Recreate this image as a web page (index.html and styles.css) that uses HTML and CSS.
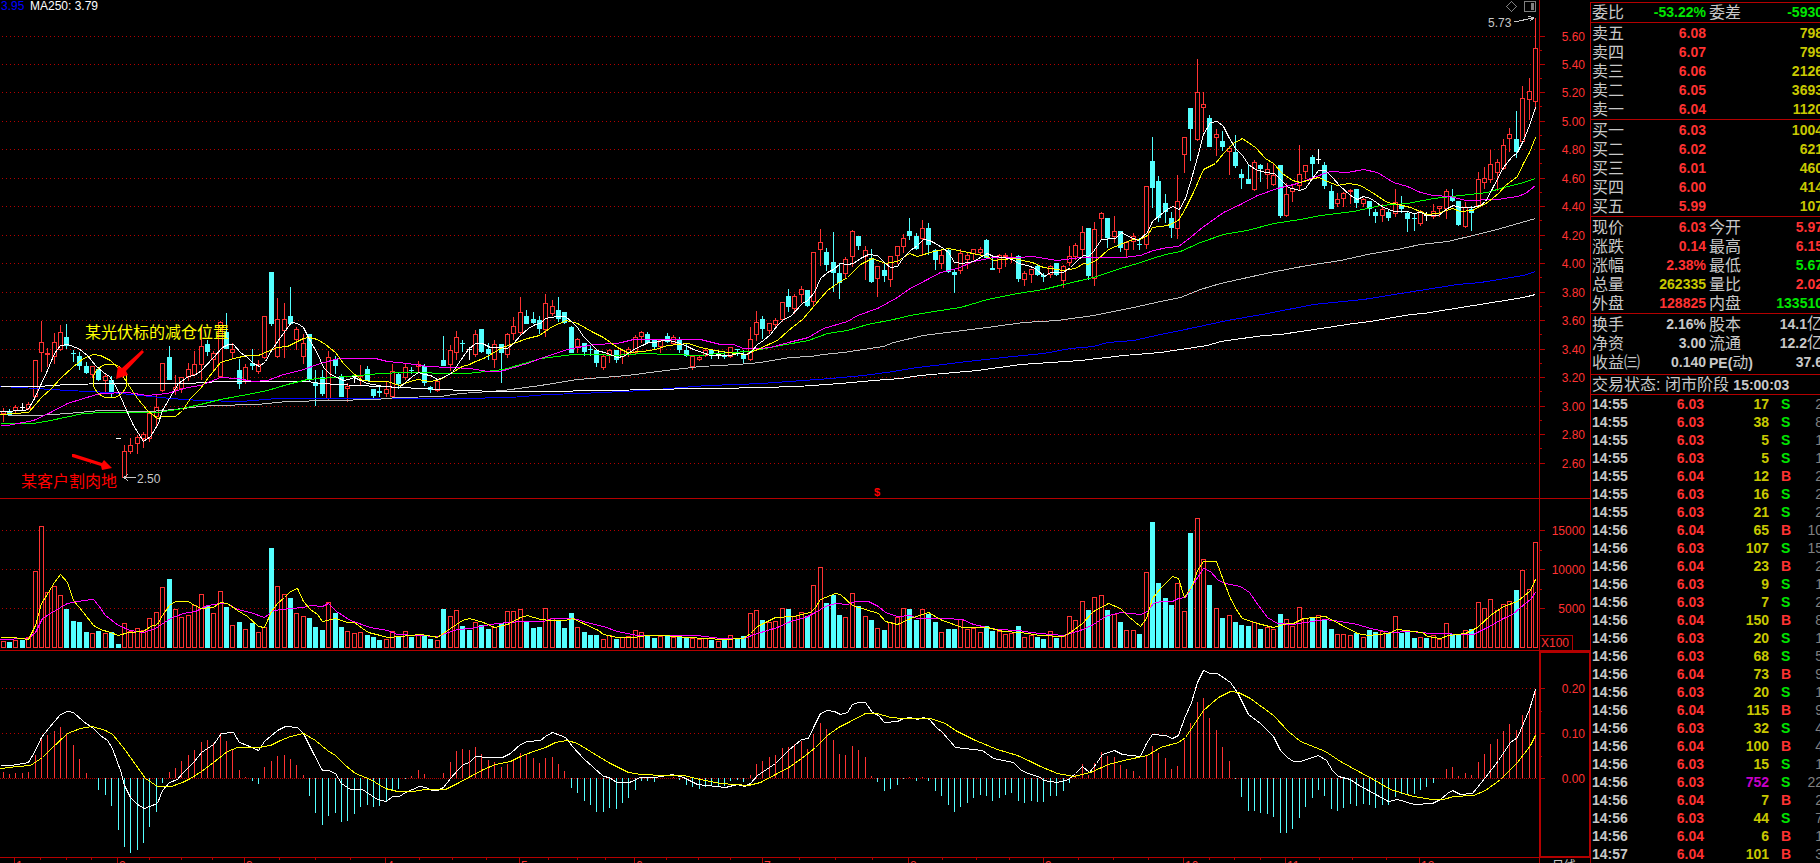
FILE: index.html
```html
<!DOCTYPE html>
<html lang="zh-CN">
<head>
<meta charset="utf-8">
<title>日线</title>
<link rel="stylesheet" href="styles.css">
</head>
<body>
<main class="terminal">
  <section class="charts">
    <svg class="plot" id="price" viewBox="0 0 1591 498" preserveAspectRatio="none"></svg>
    <svg class="plot" id="volume" viewBox="0 498 1591 152" preserveAspectRatio="none"></svg>
    <svg class="plot" id="macd" viewBox="0 650 1591 213" preserveAspectRatio="none"></svg>
  </section>
  <aside class="quote">
    <table class="block block-first">
      <tr><th>委比</th><td class="down">-53.22%</td><th>委差</th><td class="down">-5930</td></tr>
    </table>
    <table class="block">
      <tr><th>卖五</th><td class="up">6.08</td><th></th><td class="vol">798</td></tr>
      <tr><th>卖四</th><td class="up">6.07</td><th></th><td class="vol">799</td></tr>
      <tr><th>卖三</th><td class="up">6.06</td><th></th><td class="vol">2126</td></tr>
      <tr><th>卖二</th><td class="up">6.05</td><th></th><td class="vol">3693</td></tr>
      <tr><th>卖一</th><td class="up">6.04</td><th></th><td class="vol">1120</td></tr>
    </table>
    <table class="block">
      <tr><th>买一</th><td class="up">6.03</td><th></th><td class="vol">1004</td></tr>
      <tr><th>买二</th><td class="up">6.02</td><th></th><td class="vol">621</td></tr>
      <tr><th>买三</th><td class="up">6.01</td><th></th><td class="vol">460</td></tr>
      <tr><th>买四</th><td class="up">6.00</td><th></th><td class="vol">414</td></tr>
      <tr><th>买五</th><td class="up">5.99</td><th></th><td class="vol">107</td></tr>
    </table>
    <table class="block">
      <tr><th>现价</th><td class="up">6.03</td><th>今开</th><td class="up">5.97</td></tr>
      <tr><th>涨跌</th><td class="up">0.14</td><th>最高</th><td class="up">6.15</td></tr>
      <tr><th>涨幅</th><td class="up">2.38%</td><th>最低</th><td class="down">5.67</td></tr>
      <tr><th>总量</th><td class="vol">262335</td><th>量比</th><td class="up">2.02</td></tr>
      <tr><th>外盘</th><td class="up">128825</td><th>内盘</th><td class="down">133510</td></tr>
    </table>
    <table class="block block-stats">
      <tr><th>换手</th><td>2.16%</td><th>股本</th><td>14.1<span class="cn">亿</span></td></tr>
      <tr><th>净资</th><td>3.00</td><th>流通</th><td>12.2<span class="cn">亿</span></td></tr>
      <tr><th>收益㈢</th><td>0.140</td><th><b>PE(</b>动<b>)</b></th><td>37.6</td></tr>
    </table>
    <p class="status">交易状态: 闭市阶段 <b>15:00:03</b></p>
    <table class="ticks"><tbody id="ticks"></tbody></table>
  </aside>
</main>
<script src="chart.js"></script>
</body>
</html>
```
FILE: styles.css
```css
* { box-sizing: border-box; }
body {
  margin: 0;
  background: #000;
  color: #c8c8c8;
  font-family: "Liberation Sans", "Noto Sans CJK SC", sans-serif;
  font-size: 14px;
}
.terminal {
  display: grid;
  grid-template-columns: minmax(0, 1fr) 229px;
  height: 100vh;
  overflow: hidden;
}
.charts {
  display: grid;
  grid-template-rows: 498fr 152fr 213fr;
  min-height: 0;
}
.plot {
  display: block;
  width: 100%;
  height: 100%;
  min-height: 0;
  shape-rendering: crispEdges;
}
.plot text { font-size: 12px; fill: #c8c8c8; }
.plot .scale { fill: #ff3232; text-anchor: end; }
.plot .month, .plot .unit { fill: #ff3232; }
.plot .ma-blue { fill: #0000ff; }
.plot .ma-white { fill: #fff; }
.plot .mark { fill: #f00; font-size: 11px; font-weight: bold; }
.plot .note { font-size: 16px; fill: #ff0; }
.plot .note-red { fill: #f00; }
.frame { stroke: #b40000; fill: none; }
.frame-thick { stroke: #b40000; stroke-width: 2; fill: none; }
.grid { stroke: #b40000; stroke-dasharray: 1 3; }
.zero { stroke: #b40000; stroke-dasharray: 1 1; }
.line { fill: none; stroke-width: 1; }
.hollow { fill: #000; stroke: #ff3232; }
.rise { fill: #ff3232; }
.fall { fill: #54ffff; }
.flat { fill: #fff; }
.icon { fill: none; stroke: #808080; }
.icon-fill { fill: #808080; }
.pointer { fill: none; stroke: #c8c8c8; }
.arrow { fill: #f00; shape-rendering: auto; }
.ring { fill: none; stroke: #ff0; }

.quote { overflow: hidden; padding-top: 2px; white-space: nowrap; }
.quote table { width: 232px; table-layout: fixed; border-collapse: separate; border-spacing: 0; }
.block { border-top: 1px solid #b40000; padding: 1px 0 0; }
.block-first { padding: 0; }
.block-stats { padding-bottom: 2px; }
.quote th, .quote td { padding: 0; height: 19px; line-height: 19px; }
.block th { width: 43px; padding-left: 3px; text-align: left; font-size: 16px; font-weight: 400; }
.block th:first-child { width: 38px; padding-left: 1px; }
.block td { width: 74px; text-align: right; font-weight: bold; }
.block td:nth-child(2) { width: 77px; }
.block b, .status b { font-size: 14px; font-weight: bold; line-height: 0; }
.cn { font-size: 16px; font-weight: 400; line-height: 0; }
.up { color: #ff3232; }
.down { color: #00e600; }
.vol { color: #c8c800; }
.big { color: #c800c8; }
.status {
  margin: 0;
  border-top: 1px solid #b40000;
  border-bottom: 1px solid #b40000;
  padding-left: 1px;
  height: 21px;
  line-height: 19px;
  font-size: 16px;
}
.quote .ticks td { height: 18px; line-height: 18px; font-weight: bold; text-align: right; }
.quote .ticks .time { width: 41px; padding-left: 1px; text-align: left; }
.ticks .price { width: 72px; }
.ticks .lots { width: 65px; }
.quote .ticks .side { width: 30px; padding-left: 12px; text-align: left; }
.quote .ticks .count { width: 24px; color: #808080; font-weight: normal; }
```
FILE: chart.js
```js
// One entry per day: colour, then high, body top, body bottom and low.
const candles = `r408,411,414,421 c409,411,415,415 r405,407,411,412 w403,407,408,411 r402,404,409,409 r360,360,397,397
r321,342,353,371 r348,353,355,366 r333,342,357,363 r325,332,350,350 c324,337,346,349 c350,353,354,362 c352,356,366,370
c362,366,373,374 r366,366,375,377 c368,369,380,381 r374,376,381,392 c376,380,394,397 w438,438,439,439 r445,451,478,478
r438,445,452,453 r435,437,444,453 r432,434,439,447 r413,413,439,441 r394,407,417,427 r363,363,391,391 c346,357,380,380
r375,387,390,394 r377,377,389,392 r363,369,377,380 r351,364,375,375 r326,346,365,379 c340,344,352,356 r351,353,360,370
r321,322,377,377 c313,332,349,349 r343,349,353,357 c359,370,384,389 r364,367,381,383 c349,363,366,370 r360,364,372,373
r316,316,358,358 c272,272,324,326 r298,319,357,357 r303,319,331,357 c287,316,324,324 r327,329,340,349 r334,343,357,363
c334,334,379,381 c370,382,386,406 c370,377,394,396 r351,357,399,399 c356,359,366,374 c374,376,397,397 r383,386,389,401
w375,376,377,383 r365,375,377,384 c366,369,381,381 c389,389,396,398 c386,391,393,397 r381,389,394,396 r364,371,397,397
c373,374,384,389 r363,367,378,379 c367,370,371,374 r361,364,367,371 c364,366,383,386 c386,387,390,393 r381,381,391,391
c336,360,366,366 r345,350,365,370 r331,337,353,359 c340,343,344,352 w347,349,350,360 r330,334,355,356 c329,329,352,353
c343,349,354,360 r340,344,360,367 c344,344,353,383 r333,334,355,357 r317,326,334,339 r297,312,333,335 c310,316,324,324
c312,319,323,324 c316,320,329,334 r294,303,330,336 r300,306,314,315 c297,310,319,322 c312,312,323,324 c326,327,353,353
r338,339,347,352 c343,343,352,356 c345,349,350,356 c350,350,363,367 r355,356,368,369 r349,350,355,362 c350,350,360,363
r350,350,357,363 r347,349,355,356 r335,337,353,353 r331,332,337,342 c332,334,343,343 c339,340,347,350 r339,340,347,352
c333,336,342,343 r335,337,344,344 c337,339,350,353 c343,350,356,357 r355,356,367,369 r355,357,360,360 r349,350,356,356
c350,350,354,359 w350,354,355,359 c352,355,357,359 r347,347,357,357 c349,349,350,356 c350,354,359,364 r327,339,360,360
r311,322,335,340 c316,319,329,339 r323,323,331,333 r318,320,325,327 r302,302,320,321 c289,296,307,312 r294,296,309,313
r286,289,295,302 c290,290,306,307 r252,252,302,305 r229,242,250,265 c248,252,265,271 c232,262,273,292 c263,273,283,299
r257,259,274,277 r230,231,257,266 c236,236,246,250 r246,250,257,279 c249,258,282,283 r266,266,279,296 c264,270,276,282
r256,256,280,286 r246,246,256,263 r234,238,247,252 c218,231,236,240 c233,236,249,250 r220,228,239,255 c223,228,245,255
c249,250,260,270 r250,255,264,268 c249,250,272,273 c270,272,275,293 r249,253,271,273 r253,255,260,268 r249,249,254,259
r247,249,253,254 c239,240,258,258 c258,268,270,270 r254,255,269,272 r253,255,256,266 r253,257,258,262 c255,256,279,282
r271,273,280,285 r269,269,275,282 c265,266,275,276 c273,275,277,282 r265,266,275,277 c263,263,275,276 r265,266,281,287
r246,256,263,265 r243,245,257,259 r226,232,250,256 c228,228,276,280 r222,229,279,285 r212,213,219,239 c218,218,238,248
r216,231,237,242 c231,231,248,252 r241,242,250,256 r233,236,242,249 c238,244,245,250 r186,186,245,248 c137,161,188,208
c176,181,218,222 c194,203,212,223 c212,218,228,238 r175,201,229,238 r137,137,155,172 c108,108,129,161 r59,92,140,140
r92,104,108,131 c115,118,147,147 r129,134,138,155 c131,141,147,151 r146,148,152,174 c135,152,166,168 c169,174,178,189
c164,179,184,184 r160,162,190,190 c164,165,169,182 r163,169,175,188 r164,175,185,185 c165,165,216,218 r183,194,216,216
r185,188,192,201 r145,174,186,189 r165,165,172,178 c155,157,164,178 w149,159,160,164 c162,165,186,189 c185,191,209,209
r193,199,204,206 r192,193,199,206 r189,190,192,203 c189,189,203,208 r198,199,204,206 c201,201,209,216 c209,212,216,223
r204,209,216,221 c210,212,218,221 r189,202,214,216 c196,205,209,213 c211,213,219,232 c213,218,219,231 r210,211,224,225
w212,215,216,221 r204,211,217,218 r206,206,209,216 r189,191,209,218 c189,197,201,202 c201,201,225,226 r202,207,227,227
c206,209,213,231 r172,179,206,206 r167,178,183,188 r150,164,180,182 r159,162,173,190 r139,145,169,169 r128,134,139,151
c111,139,152,158 r86,98,142,142 r78,91,100,119 r18,48,102,109`.split(/\s+/).map(s => [s[0], ...s.slice(1).split(',').map(Number)]);

const volumes = [641,642,640,640,637,571,526,592,586,595,609,621,622,632,633,631,633,632,644,623,631,628,630,618,612,587,579,
609,617,615,605,594,606,613,591,607,625,622,629,623,632,627,548,586,594,598,613,616,618,627,630,602,613,627,631,633,632,635,
637,640,639,631,636,631,637,635,635,639,640,609,616,610,626,630,622,625,629,627,623,611,611,609,621,628,627,608,618,621,628,
613,627,632,635,635,639,635,639,637,636,630,632,635,638,636,635,637,637,637,638,639,638,640,641,639,635,639,636,613,610,620,
622,621,608,609,616,612,616,585,567,603,595,615,617,593,606,616,620,628,630,622,617,608,609,620,609,614,622,632,629,629,619,
629,628,632,626,631,631,634,633,626,637,635,637,639,631,638,636,616,620,601,610,597,595,610,614,622,630,630,634,572,522,583,
598,605,583,611,533,518,559,585,608,618,615,622,625,626,622,629,627,629,614,619,626,607,618,618,615,619,629,634,634,635,633,
637,630,632,631,633,616,633,632,638,637,638,635,639,623,634,634,630,629,602,608,599,610,604,601,590,570,589,542];

const histogram = [772,774,773,773,772,755,737,735,731,727,733,745,759,773,778,790,795,806,830,847,853,850,843,827,812,783,772,
768,761,755,750,742,740,743,733,741,749,770,777,781,784,767,761,756,755,759,765,775,796,813,825,816,813,822,821,814,807,805,
807,806,802,791,789,779,776,770,774,778,778,773,762,751,749,750,747,754,760,762,767,764,760,753,755,758,763,758,757,764,771,
788,793,801,805,812,812,808,809,803,798,790,781,781,782,778,778,777,780,785,787,789,787,786,786,786,781,780,782,775,764,761,
757,755,748,747,744,741,749,734,723,729,740,754,755,746,750,757,776,782,791,789,785,779,777,781,777,781,791,796,805,812,807,
803,798,795,796,801,798,795,793,801,803,801,802,802,796,796,791,783,775,764,775,763,752,756,757,765,769,771,776,755,746,753,
758,769,766,740,723,702,698,718,730,747,761,779,797,811,811,813,814,817,833,833,829,818,807,798,790,796,809,811,808,804,806,
804,805,808,805,805,797,794,795,794,790,787,783,778,769,767,776,773,775,762,754,744,739,731,724,730,715,707,689];

const priceLines = {
'#0000ff': '0,386 20,387 67,390 110,392 140,395 170,398 200,400 240,401 277,398 317,398 400,398 460,398 510,397 547,394 580,393 643,390 707,385 737,384 760,383 803,380 830,378 863,375 893,371 917,367 943,364 967,361 1003,357 1043,353 1070,348 1093,346 1107,342 1133,340 1160,334 1180,330 1227,320 1267,313 1313,304 1363,299 1400,293 1457,284 1480,282 1523,275 1535,271',
'#c0c0c0': '7,415 37,415 67,413 100,410 150,411 173,409 200,406 213,405 257,404 287,401 375,399 397,397 440,396 460,393 503,390 540,385 577,379 627,375 657,371 700,366 737,364 760,362 790,357 810,356 823,354 843,352 883,346 893,342 923,335 947,332 987,327 1023,322 1057,320 1093,315 1133,307 1160,301 1180,297 1200,289 1220,283 1270,272 1307,265 1340,260 1367,254 1397,249 1420,244 1447,241 1477,234 1500,228 1535,218',
'#fefefe': '0,386 37,386 67,384 110,383 187,383 220,381 307,381 320,383 357,385 380,386 420,388 463,390 500,391 553,391 593,390 667,389 680,388 717,388 760,387 797,386 840,383 873,380 900,378 920,375 977,370 1020,364 1080,360 1123,355 1160,352 1180,349 1207,345 1220,341 1263,335 1280,334 1327,327 1353,323 1370,321 1410,314 1423,313 1473,305 1523,297 1535,294',
'#00ff00': '0,423 33,423 50,420 83,413 103,412 157,412 177,409 200,404 220,399 247,394 267,390 287,384 307,379 333,377 358,375 380,373 403,372 427,372 435,373 467,373 503,369 527,362 540,358 573,354 597,354 613,355 643,353 670,354 700,355 717,353 747,351 760,349 780,345 808,340 827,333 847,330 867,324 893,319 910,315 940,310 960,307 987,299 1017,293 1043,289 1063,284 1093,277 1120,268 1137,263 1152,258 1165,254 1180,251 1200,242 1223,234 1247,230 1273,223 1300,219 1320,215 1353,211 1380,205 1407,203 1433,198 1460,195 1487,192 1503,187 1520,183 1535,178',
'#ff00ff': '0,425 7,425 33,420 50,412 67,403 83,398 100,393 127,392 147,395 167,393 187,387 200,385 220,377 237,378 253,381 267,380 283,374 300,370 320,363 338,358 375,358 387,361 407,363 427,366 450,367 470,368 487,371 500,371 527,363 540,358 567,349 593,344 617,343 633,339 700,339 720,344 733,344 743,348 760,348 770,347 788,342 808,337 823,328 847,321 857,315 877,308 897,297 908,289 927,279 940,272 957,268 973,261 993,257 1017,257 1032,256 1057,260 1080,257 1123,257 1140,255 1153,250 1167,247 1178,246 1190,237 1202,227 1223,212 1240,204 1257,195 1277,188 1297,183 1313,177 1330,171 1347,172 1363,169 1377,172 1393,182 1407,186 1420,192 1433,195 1450,196 1465,200 1497,199 1517,196 1525,193 1535,185',
'#ffff00': '0,414 28,412 35,404 41,397 50,389 60,378 72,367 83,358 93,354 100,355 110,360 118,368 127,383 137,398 147,410 157,418 162,416 175,416 182,410 190,398 200,388 208,377 220,362 233,358 247,355 258,355 267,351 277,347 287,346 295,342 303,338 309,337 317,339 325,344 335,352 343,363 353,373 362,380 373,381 387,381 399,385 410,381 417,379 430,381 440,379 450,373 462,366 469,364 475,361 483,358 492,353 502,347 513,343 527,338 539,335 552,326 566,320 577,323 593,332 603,337 617,347 627,352 643,351 655,349 667,345 688,343 700,347 710,349 727,352 745,354 755,350 768,344 777,340 788,330 802,319 814,305 827,290 837,283 847,277 860,264 872,258 885,263 897,261 909,253 917,256 933,251 948,248 963,251 977,254 987,256 993,260 1013,258 1032,262 1043,267 1063,270 1075,268 1083,263 1088,264 1097,259 1108,249 1122,243 1133,239 1140,239 1147,235 1152,227 1167,225 1178,220 1185,208 1193,192 1203,169 1215,163 1223,153 1233,143 1242,138 1255,147 1265,158 1273,163 1282,173 1292,180 1300,182 1310,179 1318,177 1327,181 1337,185 1348,183 1360,185 1370,191 1387,202 1398,204 1410,207 1427,214 1437,213 1452,208 1460,211 1472,210 1487,202 1498,193 1505,185 1517,176 1523,163 1529,152 1535,137',
'#ffffff': '0,411 25,410 28,408 33,400 41,383 47,370 54,353 60,345 67,344 78,348 87,355 95,365 103,372 109,376 115,385 123,403 133,425 143,441 150,436 158,423 162,410 169,398 178,383 188,376 194,375 201,370 213,357 222,347 228,344 233,344 240,352 247,357 253,363 259,366 265,361 271,350 280,337 291,322 297,323 303,327 309,339 317,353 323,367 330,374 337,377 343,380 348,379 354,377 360,380 367,383 383,386 399,387 405,382 412,376 418,372 424,374 430,375 437,379 443,377 452,372 460,360 468,349 475,343 482,343 490,347 497,347 507,348 513,343 520,335 528,328 535,324 540,323 545,318 557,316 565,316 572,322 577,327 583,336 590,343 597,350 607,353 617,357 623,356 635,348 642,345 648,342 655,342 662,340 668,340 677,342 687,346 693,349 702,352 710,355 720,355 730,355 737,353 747,354 752,350 757,344 763,340 770,334 777,325 783,319 790,316 802,303 807,300 814,292 820,278 827,272 833,269 840,263 847,264 853,263 860,258 868,254 877,255 885,263 890,267 897,266 903,257 910,250 917,245 923,239 929,240 935,243 943,248 948,252 954,262 962,263 973,261 980,257 987,253 993,256 1003,257 1012,259 1018,263 1027,265 1035,268 1044,276 1050,272 1063,272 1070,267 1077,260 1083,255 1088,256 1093,251 1101,239 1115,238 1121,232 1128,236 1138,240 1147,232 1152,221 1159,215 1167,209 1172,206 1179,209 1185,198 1190,182 1197,157 1203,134 1210,122 1217,121 1223,126 1228,136 1235,148 1242,155 1248,164 1255,169 1265,172 1274,173 1280,179 1288,187 1299,190 1305,188 1312,178 1318,170 1325,170 1332,177 1339,185 1350,195 1357,199 1363,196 1370,198 1376,202 1383,207 1394,211 1407,211 1413,213 1420,212 1427,215 1438,215 1447,208 1453,205 1460,207 1472,207 1480,205 1485,201 1492,188 1503,167 1511,157 1517,152 1523,140 1529,125 1535,107'
};
const volumeLines = {
'#ff00ff': '0,639 28,638 35,632 42,618 50,613 60,607 67,603 83,600 93,599 98,605 105,615 118,625 130,630 143,632 155,628 170,618 183,613 195,611 207,605 220,603 227,603 237,609 250,612 264,617 273,610 290,608 303,607 310,605 322,606 328,603 336,611 350,620 370,627 387,630 397,634 437,636 445,633 457,629 470,628 485,625 497,623 520,621 543,621 552,618 573,618 590,623 603,626 617,631 637,635 697,635 720,638 743,638 757,633 777,627 790,621 805,617 815,612 825,606 835,603 847,604 855,601 868,601 878,606 885,612 897,616 910,615 917,618 945,618 962,619 973,624 987,627 997,629 1018,630 1030,632 1040,633 1063,635 1080,630 1093,624 1105,616 1120,612 1140,614 1147,611 1153,603 1160,601 1172,601 1178,598 1185,597 1192,585 1203,568 1210,571 1218,580 1225,583 1240,586 1249,592 1258,605 1267,617 1277,623 1293,624 1305,622 1325,619 1340,621 1357,624 1370,628 1390,632 1410,631 1430,633 1473,634 1487,627 1503,618 1512,614 1520,607 1530,599 1535,592',
'#ffff00': '0,637 13,637 28,639 35,625 41,603 48,592 54,582 60,574 67,582 73,600 83,612 93,625 100,629 110,632 118,635 128,632 143,631 150,626 157,624 162,615 169,605 175,601 188,601 194,605 201,608 213,607 220,602 227,603 237,610 247,616 258,626 264,627 271,611 277,603 284,597 290,591 297,588 303,601 310,609 317,614 322,621 335,618 347,622 354,622 362,628 368,632 380,635 387,637 400,636 420,634 433,636 437,637 450,628 462,620 469,618 483,622 494,627 507,624 520,617 527,615 540,619 550,620 565,620 572,618 583,623 598,630 603,634 617,637 633,637 647,635 663,635 687,637 723,639 743,638 750,633 757,626 775,617 793,616 810,612 815,607 820,599 835,593 840,594 852,605 865,609 878,613 885,621 897,624 910,618 928,612 942,620 962,627 987,627 1003,631 1020,632 1040,635 1063,636 1070,632 1082,623 1093,611 1108,603 1120,608 1128,616 1140,626 1146,618 1152,598 1160,588 1172,576 1178,578 1184,597 1192,585 1197,570 1203,561 1216,561 1223,580 1230,598 1237,611 1242,618 1257,623 1273,627 1287,623 1293,623 1303,618 1325,616 1340,624 1357,633 1368,635 1388,633 1397,629 1422,632 1427,636 1440,638 1448,635 1465,633 1477,627 1490,615 1503,606 1517,601 1530,590 1535,579'
};
const macdLines = {
'#ffffff': '0,765 10,765 17,764 28,762 35,750 41,737 48,728 60,714 67,711 73,712 83,721 93,728 100,735 107,740 112,748 120,770 124,785 130,797 137,804 144,808 157,803 162,790 169,782 177,779 182,773 194,761 201,752 213,744 221,733 233,732 239,742 247,745 258,750 264,741 277,730 285,726 297,727 303,733 313,753 322,770 328,770 335,773 341,783 350,789 362,789 368,793 377,799 386,801 392,796 399,796 405,792 419,786 425,787 432,790 437,790 443,787 450,778 457,770 463,764 469,762 475,756 488,757 502,757 510,753 520,744 527,741 540,740 545,736 552,732 565,737 572,746 583,758 603,776 609,777 616,782 629,782 640,777 655,777 672,774 683,777 697,784 725,787 737,784 744,786 750,783 757,775 775,763 788,750 801,739 808,738 814,725 820,713 827,710 834,711 840,714 847,712 852,704 858,702 865,702 872,712 878,715 884,722 897,721 903,718 910,717 917,719 923,717 929,719 936,727 942,732 955,747 982,750 993,758 1013,762 1020,769 1025,772 1040,777 1043,780 1057,782 1068,779 1075,773 1082,766 1089,772 1096,763 1102,754 1114,750 1122,754 1140,756 1146,743 1152,734 1165,735 1172,738 1178,735 1184,718 1191,702 1197,682 1203,670 1210,673 1217,673 1230,682 1237,692 1248,714 1260,723 1273,736 1280,750 1287,757 1293,761 1300,761 1318,755 1326,760 1332,770 1338,776 1350,779 1357,784 1368,790 1377,795 1388,801 1397,799 1414,804 1432,803 1440,799 1447,793 1452,790 1460,794 1472,793 1485,777 1498,760 1510,742 1517,737 1523,723 1529,709 1535,689',
'#ffff00': '0,768 17,766 30,765 42,757 50,749 67,733 80,728 92,726 105,730 112,734 118,741 125,750 135,764 145,778 157,786 171,786 182,782 190,778 201,771 213,762 227,751 237,747 258,747 270,745 280,740 290,736 303,733 315,740 327,750 335,755 345,765 355,773 370,779 385,788 397,791 412,791 425,789 445,789 457,783 470,776 483,769 495,764 510,761 520,756 533,751 545,747 555,742 567,740 577,743 590,751 608,762 628,772 640,774 665,775 683,775 700,779 720,783 748,785 760,782 775,774 790,766 805,755 815,747 827,735 838,727 848,722 865,713 877,713 890,717 903,718 930,718 945,723 955,730 975,740 997,749 1017,755 1028,760 1040,766 1057,773 1073,776 1090,772 1108,764 1123,760 1147,755 1160,747 1178,742 1185,737 1203,710 1218,697 1230,691 1238,692 1250,698 1273,715 1288,731 1300,741 1325,751 1340,761 1360,772 1373,779 1390,789 1413,796 1432,799 1443,799 1453,796 1473,795 1485,790 1500,779 1517,762 1530,745 1535,735'
};

const xOf = i => Math.floor(3.1 + i * 6.385);
const rect = (cls, x, y, w, h) => `<rect class="${cls}" x="${x}" y="${y}" width="${w}" height="${h}"/>`;
const hline = (cls, y, x1, x2) => `<path class="${cls}" d="M${x1} ${y}.5H${x2}"/>`;
const vline = (cls, x, y1, y2) => `<path class="${cls}" d="M${x}.5 ${y1}V${y2}"/>`;
const text = (cls, x, y, s) => `<text class="${cls}" x="${x}" y="${y}">${s}</text>`;
const lines = set => Object.entries(set).map(([c, p]) =>
  `<polyline class="line" stroke="${c}" transform="translate(.5 .5)" points="${p}"/>`).join('');
const scale = (rows) => rows.map(([y, s]) =>
  hline('grid', y, 2, 1536) + hline('frame', y, 1540, 1545) + text('scale', 1585, y + 5, s)).join('');
const minor = ys => ys.map(y => hline('frame', y, 1540, 1542)).join('');

// Price pane
const priceRows = [36,64,92,121,149,178,206,235,263,292,320,349,377,406,434,463].map((y, i) => [y, (5.6 - i * 0.2).toFixed(2)]);
let out = scale(priceRows) + minor(priceRows.slice(0, -1).map(([y]) => y + 14));
candles.forEach(([k, hi, top, bot, lo], i) => {
  const x = xOf(i), cls = k === 'r' ? 'rise' : k === 'c' ? 'fall' : 'flat';
  if (k === 'r') {
    out += rect(cls, x, hi, 1, top - hi) + rect(cls, x, bot, 1, lo - bot + 1);
    out += rect('hollow', x - 1.5, top + 0.5, 4, Math.max(bot - top - 1, 1));
  } else {
    out += rect(cls, x, hi, 1, lo - hi) + rect(cls, x - 2, top, 5, Math.max(bot - top, 1));
  }
});
out += lines(priceLines);
out += vline('frame', 1539, 0, 498) + vline('frame', 1590, 2, 498);
out += text('ma-blue', 1, 10, '3.95') + text('ma-white', 30, 10, 'MA250: 3.79');
out += text('', 1488, 27, '5.73') + '<path class="pointer" d="M1514 22L1533 18M1528 16L1534 18L1530 21"/>';
out += text('', 137, 483, '2.50') + '<path class="pointer" d="M124 477.5H136M128 474L124 477.5L128 481"/>';
out += '<path class="icon" d="M1511.500 1.500L1516.500 6.500L1511.500 11.500L1506.500 6.500Z"/>';
out += '<rect class="icon" x="1524.500" y="1.500" width="11" height="10" rx="1"/>' + rect('icon-fill', 1531, 3, 3, 7);
out += text('note', 85, 338, '某光伏标的减仓位置') + text('note note-red', 21, 487, '某客户割肉地');
out += '<circle class="ring" cx="110" cy="381" r="17"/>';
out += '<path class="arrow" d="M142 350L144 352L126 371L128 375L116 379L118 366L122 368Z"/>';
out += '<path class="arrow" d="M72 454L74 454L102 463L104 460L112 468L102 470L101 466L72 457Z"/>';
out += text('mark', 874, 496, '$');
document.getElementById('price').innerHTML = out;

// Volume pane
out = scale([[530, '15000'], [569, '10000'], [608, '5000']]) + minor([550, 589]);
const fallingFlat = [3, 18, 73, 223];
volumes.forEach((y, i) => {
  const x = xOf(i), k = candles[i][0];
  out += k === 'c' || fallingFlat.includes(i)
    ? rect('fall', x - 2, y, 5, 648 - y)
    : rect('hollow', x - 1.5, y + 0.5, 4, 647 - y);
});
out += lines(volumeLines) + hline('frame', 498, 0, 1591);
out += vline('frame', 1539, 498, 650) + vline('frame', 1590, 498, 650);
out += '<path class="frame" d="M1540 635.5H1572.500V650"/>' + text('unit', 1541, 647, 'X100');
document.getElementById('volume').innerHTML = out;

// MACD pane
out = [[688, '0.20'], [733, '0.10'], [778, '0.00']].map(([y, s]) =>
  hline(y === 778 ? 'zero' : 'grid', y, y === 778 ? 0 : 2, 1538) + hline('frame', y, 1540, 1545) + text('scale', 1585, y + 5, s)).join('');
out += minor([711, 756]);
histogram.forEach((y, i) => {
  if (y < 778) out += rect('rise', xOf(i), y, 1, 778 - y);
  if (y > 778) out += rect('fall', xOf(i), 778, 1, y - 778);
});
out += lines(macdLines) + hline('frame', 650, 0, 1591) + hline('frame', 857, 0, 1540);
out += '<path class="frame-thick" d="M1540 652V857H1590V652Z"/>' + vline('frame', 1539, 650, 863) + vline('frame', 1590, 650, 863);
[14,117,244,385,519,634,762,908,1043,1183,1285,1419].forEach((x, i) => {
  out += vline('frame', x, 857, 863) + text('month', x + 2, 870, i + 1);
});
[40,66,91,149,181,212,279,315,350,419,452,486,548,577,605,666,698,730,799,835,872,942,976,1009,1078,1113,1148,1209,1234,1260,
1319,1352,1386].forEach(x => { out += vline('frame', x, 858, 860); });
out += text('', 1552, 870, '日线');
document.getElementById('macd').innerHTML = out;

// Trades: time, price, lots, side, number of orders
const trades = `14:55 6.03 17 S 2|14:55 6.03 38 S 8|14:55 6.03 5 S 1|14:55 6.03 5 S 1|14:55 6.04 12 B 2|14:55 6.03 16 S 2
14:55 6.03 21 S 2|14:56 6.04 65 B 10|14:56 6.03 107 S 15|14:56 6.04 23 B 2|14:56 6.03 9 S 1|14:56 6.03 7 S 2
14:56 6.04 150 B 8|14:56 6.03 20 S 1|14:56 6.03 68 S 5|14:56 6.04 73 B 9|14:56 6.03 20 S 1|14:56 6.04 115 B 9
14:56 6.03 32 S 4|14:56 6.04 100 B 4|14:56 6.03 15 S 1|14:56 6.03 752 S 22|14:56 6.04 7 B 2|14:56 6.03 44 S 7
14:56 6.04 6 B 1|14:57 6.04 101 B 3`.split(/[|\n]/);
document.getElementById('ticks').innerHTML = trades.map(row => {
  const [time, price, lots, side, count] = row.split(' ');
  return `<tr><td class="time">${time}</td><td class="price up">${price}</td>` +
    `<td class="lots ${lots > 500 ? 'big' : 'vol'}">${lots}</td>` +
    `<td class="side ${side === 'S' ? 'down' : 'up'}">${side}</td><td class="count">${count}</td></tr>`;
}).join('');
```
